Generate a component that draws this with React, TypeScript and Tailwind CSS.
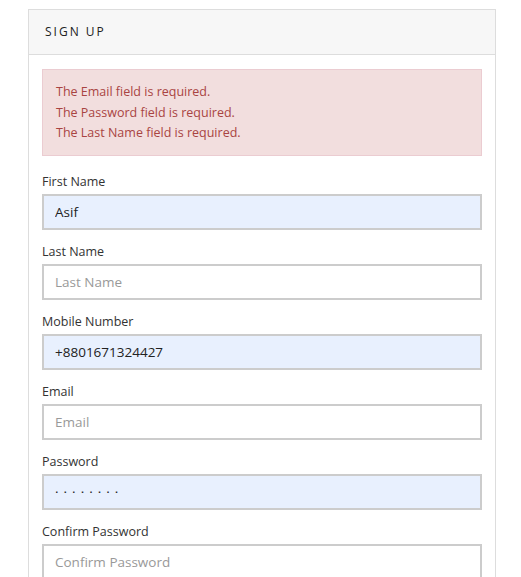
const fields = [
  { label: "First Name", placeholder: "First Name", value: "Asif", filled: true },
  { label: "Last Name", placeholder: "Last Name", value: "", filled: false },
  { label: "Mobile Number", placeholder: "Mobile Number", value: "+8801671324427", filled: true },
  { label: "Email", placeholder: "Email", value: "", filled: false },
  { label: "Password", placeholder: "Password", value: "\u00b7\u00b7\u00b7\u00b7\u00b7\u00b7\u00b7\u00b7", filled: true, secret: true },
  { label: "Confirm Password", placeholder: "Confirm Password", value: "", filled: false },
];

const errors = [
  "The Email field is required.",
  "The Password field is required.",
  "The Last Name field is required.",
];

export default function App() {
  return (
    <div className="min-h-screen bg-white pt-[9px] pl-[28px] font-['Open_Sans',sans-serif]">
      <div className="w-[468px] border border-[#dddddd] bg-white">
        {/* header */}
        <div className="flex h-[45px] items-center border-b border-[#dddddd] bg-[#f7f7f7] pl-[16px]">
          <h2 className="text-[12px] tracking-[2px] text-[#222]">SIGN UP</h2>
        </div>

        <div className="px-[13px] pt-[14px] pb-6">
          <div className="border border-[#ebccd1] bg-[#f2dede] px-[13px] pt-[12px] pb-[11px] text-[12.5px] leading-[20.5px] text-[#a94442]">
            {errors.map((e) => (
              <p key={e}>{e}</p>
            ))}
          </div>

          <form className="mt-[17px] flex flex-col gap-[13px]">
            {fields.map((f) => (
              <div key={f.label} className="flex flex-col gap-[3px]">
                <label className="text-[12.5px] leading-[18px] text-[#333]">{f.label}</label>
                <input
                  type="text"
                  defaultValue={f.value}
                  placeholder={f.placeholder}
                  className={
                    "h-[36px] w-full border-2 border-[#cccccc] px-[11px] text-[13.5px] text-[#222] outline-none placeholder:text-[#999] " +
                    (f.filled ? "bg-[#e8f0fe]" : "bg-white") +
                    (f.secret ? " tracking-[5px]" : "")
                  }
                />
              </div>
            ))}
          </form>
        </div>
      </div>
    </div>
  );
}
